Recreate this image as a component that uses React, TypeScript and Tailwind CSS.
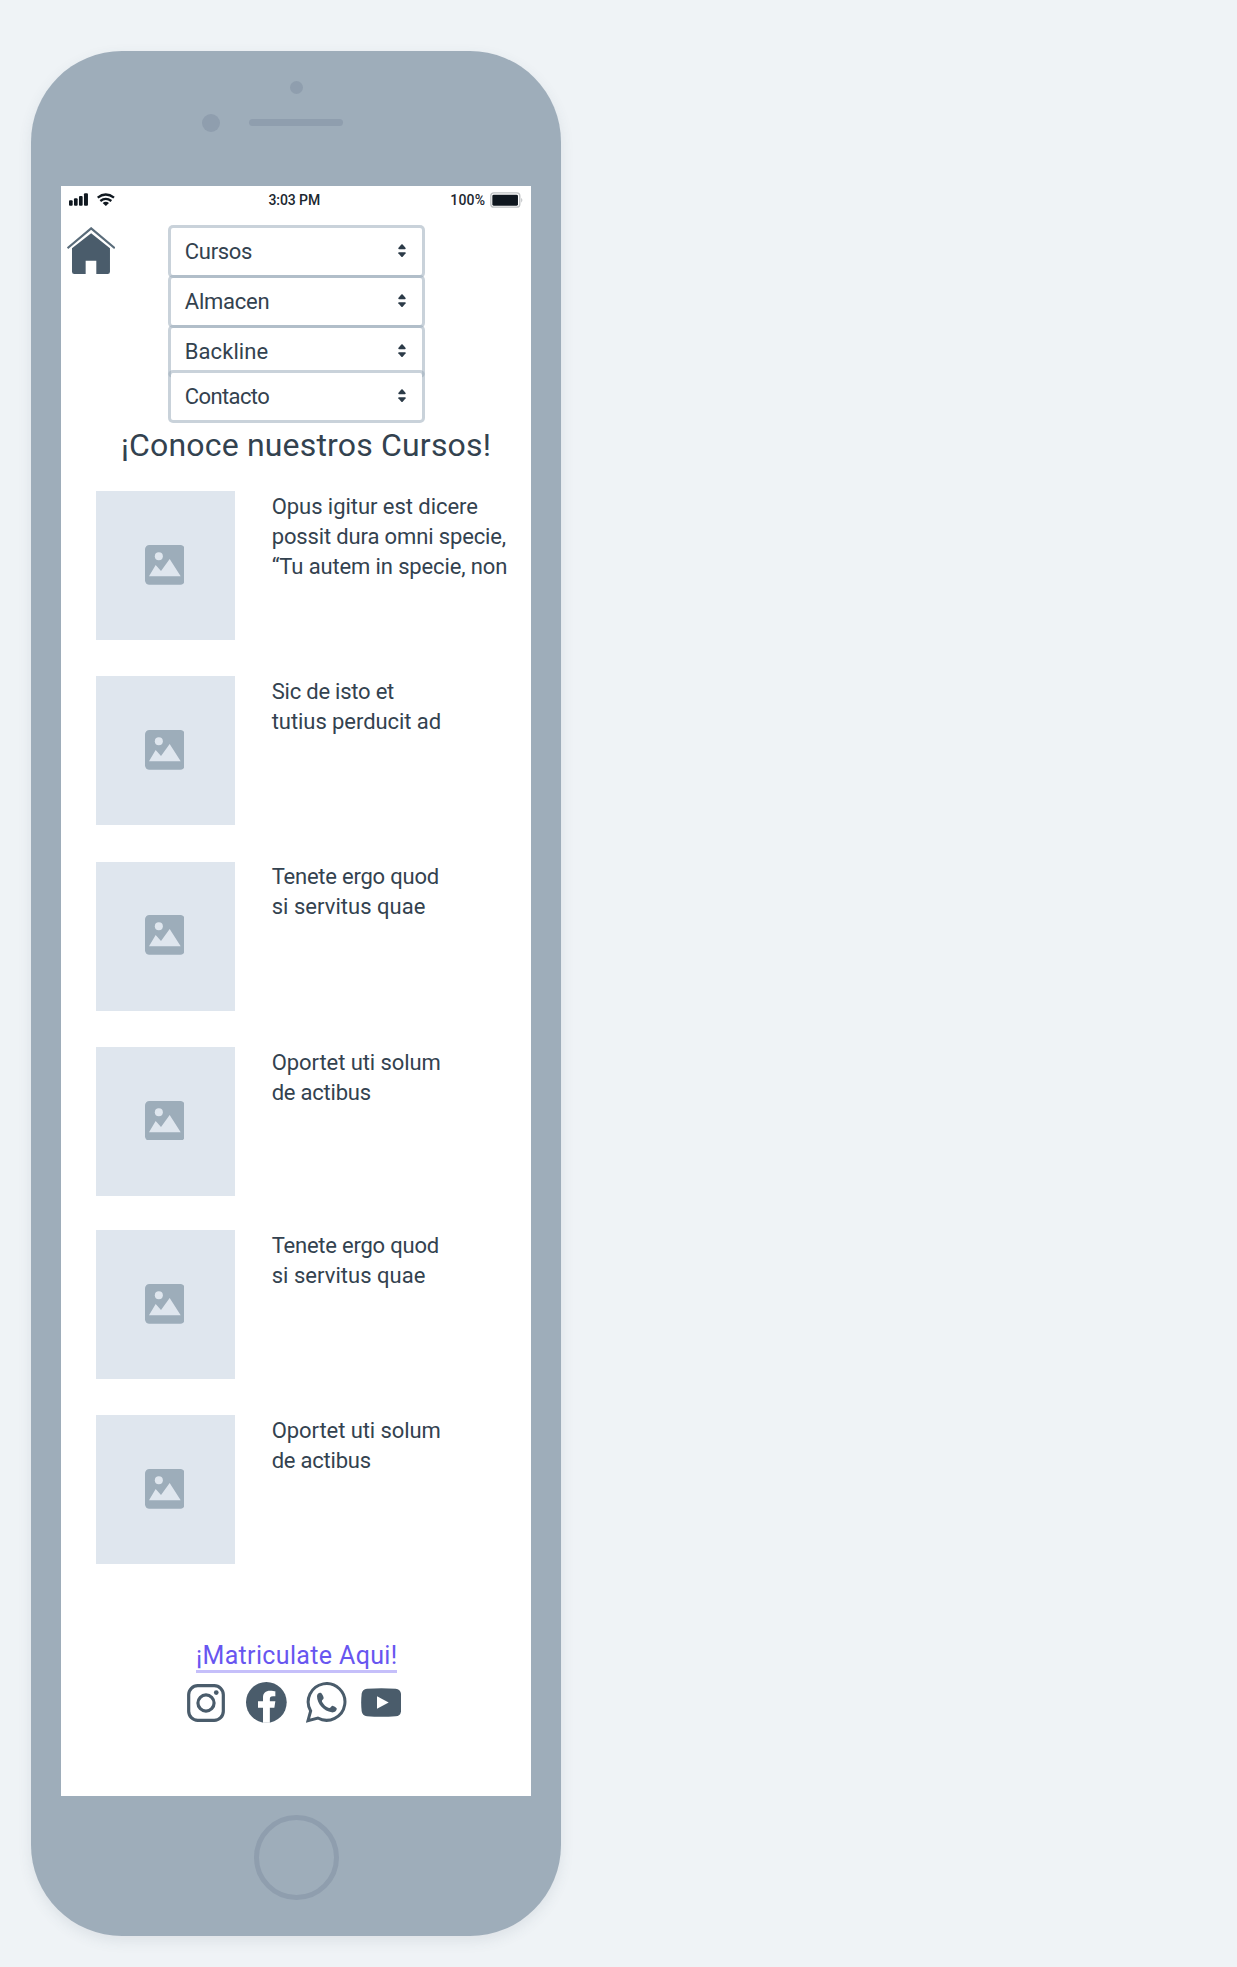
import React from "react";

type Line = { text: string; tracking: string };

const menus: (Line & { offset: string })[] = [
  { text: "Cursos", tracking: "tracking-[-0.3px]", offset: "" },
  { text: "Almacen", tracking: "tracking-[-0.26px]", offset: "-mt-[3px]" },
  { text: "Backline", tracking: "tracking-[0.07px]", offset: "-mt-[3px]" },
  { text: "Contacto", tracking: "tracking-[-0.62px]", offset: "-mt-[8px]" },
];

const tenete: Line[] = [
  { text: "Tenete ergo quod", tracking: "tracking-[-0.22px]" },
  { text: "si servitus quae", tracking: "tracking-[0.03px]" },
];
const oportet: Line[] = [
  { text: "Oportet uti solum", tracking: "tracking-[-0.07px]" },
  { text: "de actibus", tracking: "tracking-[-0.23px]" },
];

const courses: { lines: Line[]; gap: string }[] = [
  {
    gap: "mt-[26.3px]",
    lines: [
      { text: "Opus igitur est dicere", tracking: "tracking-[-0.05px]" },
      { text: "possit dura omni specie,", tracking: "tracking-[-0.14px]" },
      { text: "“Tu autem in specie, non", tracking: "tracking-[-0.13px]" },
    ],
  },
  {
    gap: "mt-[36.2px]",
    lines: [
      { text: "Sic de isto et", tracking: "tracking-[-0.22px]" },
      { text: "tutius perducit ad", tracking: "tracking-[-0.06px]" },
    ],
  },
  { gap: "mt-[36.2px]", lines: tenete },
  { gap: "mt-[36.2px]", lines: oportet },
  { gap: "mt-[34.4px]", lines: tenete },
  { gap: "mt-[36.2px]", lines: oportet },
];

function StatusBar() {
  return (
    <div className="grid h-[25px] grid-cols-3 items-center pl-[7.6px] pr-[8px] text-sm font-medium leading-[25px] text-[#1c2730]">
      <div className="flex items-center gap-[9px]">
        <svg viewBox="56 37 58 38" className="h-[12.7px] w-[19.3px] fill-[#101820]">
          <rect x="56" y="59" width="11" height="16" rx="3" />
          <rect x="71" y="53" width="11" height="22" rx="3" />
          <rect x="86" y="46" width="11" height="29" rx="3" />
          <rect x="101" y="38" width="12" height="37" rx="3" />
        </svg>
        <svg viewBox="141 37 53 38" className="h-[12.7px] w-[17.7px]" fill="none" stroke="#101820" strokeWidth="7">
          <path d="M143 51Q167 32 192 51" />
          <path d="M151 61Q167 48 184 61" />
          <path d="M158 67Q167 60 177 67L167.500 76Z" fill="#101820" stroke="none" />
        </svg>
      </div>
      <div className="-ml-[3px] pt-0.5 text-center tracking-[-0.08px]">3:03 PM</div>
      <div className="flex items-center justify-end gap-[4.5px]">
        <span className="pt-0.5 tracking-[0.2px]">100%</span>
        <svg viewBox="570 32 100 48" className="h-4 w-[33.3px]">
          <rect x="572.500" y="34.500" width="87" height="43" rx="9" fill="#fff" stroke="#bfc2c4" strokeWidth="4" />
          <rect x="577" y="40" width="77" height="33" rx="4" fill="#0f171f" />
          <path d="M664 49Q670 56 664 64Z" fill="#b3b7ba" />
        </svg>
      </div>
    </div>
  );
}

function HomeIcon() {
  return (
    <svg viewBox="51 143 145 142" className="ml-[6px] mt-[2.3px] h-[47.3px] w-[48.3px] shrink-0">
      <path d="M52.500 206.500L123.500 147L194.500 206.500" fill="none" stroke="#5a6c7a" strokeWidth="6.500" />
      <path d="M123.500 162L180 207V277Q180 284 173 284H139V244H107V284H73Q66 284 66 277V207Z" fill="#4a5c6b" />
    </svg>
  );
}

function Select({ text, tracking, offset }: Line & { offset: string }) {
  return (
    <div
      className={`relative flex h-[53px] w-[257px] items-center justify-between rounded-[5px] border-[3px] border-[#9cadbc]/55 bg-white bg-clip-padding pl-[14px] pr-[15.5px] text-[22px] text-[#33424f] ${offset}`}
    >
      <span className={tracking}>{text}</span>
      <svg viewBox="0 0 24 40" className="-mt-[2px] h-[13.3px] w-2 fill-[#2c3b48]">
        <path d="M10 1.500Q12 0 14 1.500L23 12Q24 15 21 15.500H3Q0 15 1 12Z" />
        <path d="M10 38.500Q12 40 14 38.500L23 28Q24 25 21 24.500H3Q0 25 1 28Z" />
      </svg>
    </div>
  );
}

function ImagePlaceholder() {
  return (
    <div className="flex h-[149px] w-[138.7px] shrink-0 items-center justify-center bg-[#dfe6ee] pr-[1.5px]">
      <svg viewBox="0 0 119 119" className="-mt-[2px] h-[39.7px] w-[39.7px]">
        <rect width="119" height="119" rx="13" fill="#9dadba" />
        <circle cx="41.500" cy="33.500" r="12" fill="#dfe6ee" />
        <path d="M12 94L32 60L48 78L74 42L107 94Z" fill="#dfe6ee" />
      </svg>
    </div>
  );
}

function SocialIcons() {
  return (
    <div className="ml-[126px] mt-[8.700px] flex h-[41px] items-center">
      <svg viewBox="0 0 113 113" className="h-[38px] w-[38px]" fill="none" stroke="#4a5c6b" strokeWidth="9.500">
        <rect x="5" y="5" width="103" height="103" rx="27" />
        <circle cx="56.500" cy="56.500" r="24" />
        <circle cx="87" cy="25.500" r="7" fill="#4a5c6b" stroke="none" />
      </svg>
      <svg viewBox="0 0 122 122" className="ml-[21px] h-[40.7px] w-[40.7px]">
        <circle cx="61" cy="61" r="61" fill="#4a5c6b" />
        <path
          d="M51 122V77H36V58H51V46C51 33 59 26 72 26C79 26 85 27 88 28V43H81C73 43 71.500 47 71.500 51V58H88L85 77H71.500V122Z"
          fill="#fff"
        />
      </svg>
      <svg viewBox="0 0 122 122" className="ml-[19.3px] h-[40.7px] w-[40.7px]">
        <path d="M6 116L14 87A55 55 0 1 1 35.500 108Z" fill="none" stroke="#4a5c6b" strokeWidth="9" />
        <path
          d="M33 43C33 35 40 31 45 33C48 34 53 45 53 48C53 52 46 54 48 59C53 68 60 75 69 78C73 79 76 71 80 71C83 72 91 76 92 79C93 87 85 92 77 91C54 88 33 66 33 43Z"
          fill="#4a5c6b"
        />
      </svg>
      <svg viewBox="0 0 122 87" className="ml-[14px] h-[29px] w-[40.7px]">
        <path
          d="M18 2Q61-1 104 2Q118 3 120 17Q123 43 120 70Q118 84 104 85Q61 88 18 85Q4 84 2 70Q-1 43 2 17Q4 3 18 2Z"
          fill="#4a5c6b"
        />
        <path d="M48 25L83 43.500L48 62Z" fill="#fff" />
      </svg>
    </div>
  );
}

export default function App() {
  return (
    <div className="h-[1967px] overflow-hidden bg-[#eff3f6] pl-[31px] pt-[51px] font-[Roboto,sans-serif]">
      <div className="flex h-[1885px] w-[530px] flex-col items-center rounded-[91px] bg-[#9eadba] shadow-[0_5px_14px_rgba(60,80,100,0.1)]">
        <div className="flex h-[135px] w-full flex-col items-center pt-[30px]">
          <div className="size-[13px] rounded-full bg-[#8f9eae]" />
          <div className="mt-[19.5px] flex w-[189px] items-center gap-[29px]">
            <div className="size-[18px] rounded-full bg-[#8f9eae]" />
            <div className="h-[7.5px] w-[94.5px] rounded-full bg-[#8f9eae]" />
          </div>
        </div>

        <main className="flex h-[1610px] w-[470px] flex-col bg-white">
          <StatusBar />
          <div className="mt-[14px] flex">
            <HomeIcon />
            <div className="ml-[52.5px]">
              {menus.map((m) => (
                <Select key={m.text} {...m} />
              ))}
            </div>
          </div>
          <h1 className="ml-[60px] mt-[2px] whitespace-nowrap text-[32px] leading-10 tracking-[0.18px] text-[#33424f]">
            ¡Conoce nuestros Cursos!
          </h1>

          <div className="ml-[35px]">
            {courses.map((c, i) => (
              <article key={i} className={`flex gap-[37px] ${c.gap}`}>
                <ImagePlaceholder />
                <p className="whitespace-nowrap pt-[0.7px] text-[22px] leading-[30px] text-[#33424f]">
                  {c.lines.map((l) => (
                    <span key={l.text} className={`block ${l.tracking}`}>
                      {l.text}
                    </span>
                  ))}
                </p>
              </article>
            ))}
          </div>

          <a
            href="#matricula"
            className="ml-[135px] mt-[76px] block h-[33px] w-[201.4px] whitespace-nowrap border-b-[3px] border-[#c5bffa] pt-px text-center text-[25px] leading-[30px] tracking-[0.35px] text-[#6856f0]"
          >
            ¡Matriculate Aqui!
          </a>
          <SocialIcons />
        </main>

        <div className="mt-[19px] size-[85px] rounded-full border-[5px] border-[#8f9eae]" />
      </div>
    </div>
  );
}
